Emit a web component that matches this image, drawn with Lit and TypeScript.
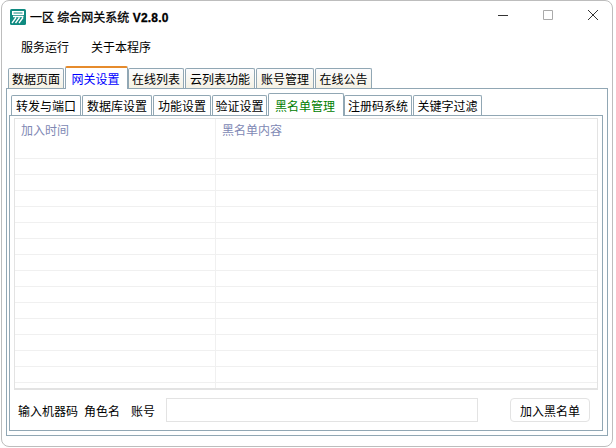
import { LitElement, html, css } from "lit";
import { customElement } from "lit/decorators.js";

const outerTabs = [
  { label: "数据页面", width: 56 },
  { label: "网关设置", width: 63 },
  { label: "在线列表", width: 56 },
  { label: "云列表功能", width: 70 },
  { label: "账号管理", width: 58 },
  { label: "在线公告", width: 57 },
];
const innerTabs = [
  { label: "转发与端口", width: 70 },
  { label: "数据库设置", width: 70 },
  { label: "功能设置", width: 58 },
  { label: "验证设置", width: 55 },
  { label: "黑名单管理", width: 76 },
  { label: "注册码系统", width: 68 },
  { label: "关键字过滤", width: 69 },
];
const rows = Array.from({ length: 15 });

@customElement("app-root")
export class AppRoot extends LitElement {
  static styles = css`
    :host {
      display: block;
      width: 616px;
      height: 448px;
      overflow: hidden;
      background: #fff;
      font-family: "Liberation Sans", "Noto Sans CJK SC", sans-serif;
      font-size: 12px;
      color: #000;
    }

    .window {
      box-sizing: border-box;
      width: 612px;
      height: 447px;
      margin-left: 1px;
      background: #fff;
      border: 1px solid #bdbdbd;
      border-radius: 8px;
      display: flex;
      flex-direction: column;
      padding: 0 4px 10px 4px;
    }

    .titlebar {
      height: 29px;
      flex: none;
      display: flex;
      align-items: center;
      padding-top: 2px;
      box-sizing: border-box;
    }

    .logo {
      margin-left: 4px;
      margin-right: 4px;
    }

    .title {
      font-size: 12px;
      -webkit-text-stroke: 0.3px #000;
      flex: 1;
    }

    .title b {
      letter-spacing: 0.2px;
    }

    .controls {
      display: flex;
      gap: 35px;
      align-self: flex-start;
      margin-top: 7px;
      padding-right: 10px;
    }

    .controls svg {
      display: block;
      width: 10px;
      height: 10px;
      overflow: visible;
    }

    .menu {
      height: 36px;
      flex: none;
      display: flex;
      align-items: center;
      gap: 22px;
      padding: 0 0 3px 15px;
      box-sizing: border-box;
    }

    .tabs {
      display: flex;
      align-items: flex-end;
      flex: none;
      position: relative;
      z-index: 1;
      padding-left: 2px;
      height: 22px;
    }

    .tab {
      box-sizing: border-box;
      height: 20px;
      margin-right: 1px;
      display: flex;
      align-items: center;
      justify-content: center;
      white-space: nowrap;
      border: 1px solid #91a7b4;
      border-bottom: none;
      border-radius: 2px 2px 0 0;
      background: linear-gradient(#fcfcfe, #f4f1e4);
    }

    .tab.active {
      height: 23px;
      margin: 0 0 -1px 0;
      padding-right: 2px;
      background: #fff;
      color: #0000ff;
      border-top: 2px solid #e68b2c;
    }

    .pane {
      flex: 1;
      min-height: 0;
      box-sizing: border-box;
      border: 1px solid #91a7b4;
      padding: 4px 4px 4px 2px;
      display: flex;
      flex-direction: column;
    }

    .sub .tab {
      background: #fff;
    }

    .sub .tab.active {
      color: #008000;
      border-top: 1px solid #91a7b4;
    }

    .inner {
      flex: 1;
      min-height: 0;
      box-sizing: border-box;
      border: 1px solid #91a7b4;
      padding: 2px 4px 0 4px;
      display: flex;
      flex-direction: column;
    }

    .grid {
      box-sizing: border-box;
      height: 272px;
      flex: none;
      border: 1px solid #e3e3e3;
      border-bottom: 2px solid #e3e3e3;
      overflow: hidden;
    }

    .row {
      box-sizing: border-box;
      display: grid;
      grid-template-columns: 200px 1fr;
      height: 16px;
      border-bottom: 1px solid #f0f0f0;
    }

    .row div + div {
      border-left: 1px solid #f0f0f0;
    }

    .row.head {
      height: 40px;
      color: #8088b4;
    }

    .row.head div {
      padding: 2px 0 0 6px;
    }

    .form {
      flex: 1;
      display: flex;
      align-items: center;
      padding-left: 4px;
    }

    .label {
      white-space: nowrap;
    }

    .label.role {
      margin-left: 6px;
    }

    .label.account {
      margin-left: 11px;
    }

    .form input {
      box-sizing: border-box;
      width: 312px;
      height: 24px;
      margin: 0 32px 0 11px;
      border: 1px solid #e3e3e3;
      background: #fff;
      outline: none;
    }

    .form button {
      box-sizing: border-box;
      width: 80px;
      height: 24px;
      border: 1px solid #e3e3e3;
      border-radius: 4px;
      background: #fff;
      font: inherit;
      padding: 0;
    }
  `;

  render() {
    return html`
      <div class="window">
        <div class="titlebar">
          <svg class="logo" width="16" height="16" viewBox="0 0 16 16">
            <rect width="16" height="16" rx="1.5" fill="#0f8a80"></rect>
            <path d="M2 2H14V6H2Z" fill="#fff"></path>
            <path d="M3.5 4H12.5" stroke="#0f8a80" stroke-width="1" fill="none"></path>
            <path d="M3 7.5H13.5M2 14L6 8.5M5.5 14L9.5 8.5M9 14L13 8.5" stroke="#fff" stroke-width="1.3" fill="none"></path>
          </svg>
          <span class="title">一区 综合网关系统 <b>V2.8.0</b></span>
          <div class="controls">
            <svg viewBox="0 0 10 10"><path d="M0 5.5H10" stroke="#333" fill="none"></path></svg>
            <svg viewBox="0 0 10 10"><path d="M.5 .5H9.5V9.5H.5Z" stroke="#aaa" fill="none"></path></svg>
            <svg viewBox="0 0 10 10"><path d="M0 0L10 10M10 0L0 10" stroke="#333" fill="none"></path></svg>
          </div>
        </div>
        <div class="menu"><span>服务运行</span><span>关于本程序</span></div>
        <div class="tabs">
          ${outerTabs.map(
            (t, i) => html`<div class="tab ${i === 1 ? "active" : ""}" style="width:${t.width}px">${t.label}</div>`
          )}
        </div>
        <div class="pane">
          <div class="tabs sub">
            ${innerTabs.map(
              (t, i) => html`<div class="tab ${i === 4 ? "active" : ""}" style="width:${t.width}px">${t.label}</div>`
            )}
          </div>
          <div class="inner">
            <div class="grid">
              <div class="row head"><div>加入时间</div><div>黑名单内容</div></div>
              ${rows.map(() => html`<div class="row"><div></div><div></div></div>`)}
            </div>
            <div class="form">
              <span class="label">输入机器码</span>
              <span class="label role">角色名</span>
              <span class="label account">账号</span>
              <input />
              <button>加入黑名单</button>
            </div>
          </div>
        </div>
      </div>
    `;
  }
}
